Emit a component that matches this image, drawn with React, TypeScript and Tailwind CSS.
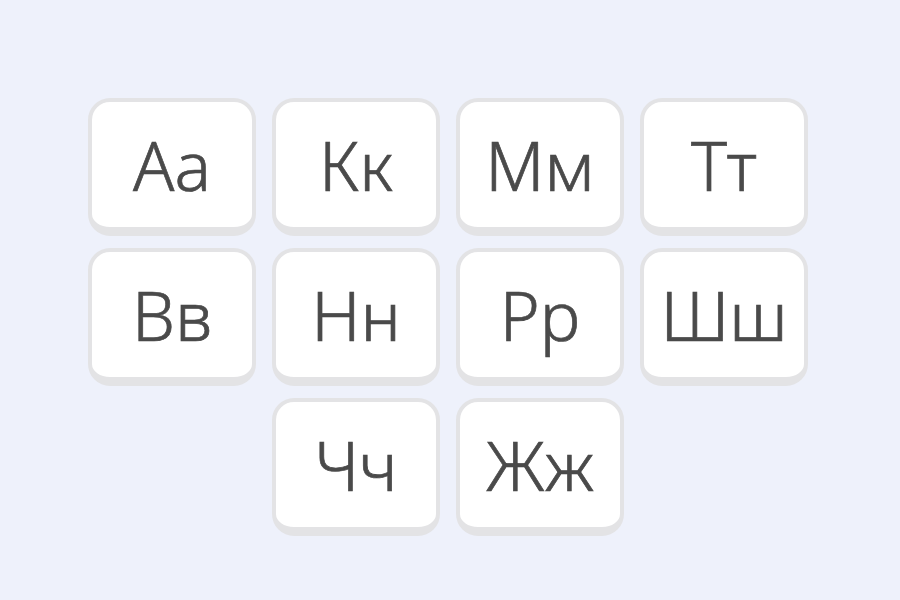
import React from "react";

const rows: (string | null)[][] = [
  ["Aa", "Кк", "Мм", "Тт"],
  ["Вв", "Нн", "Рр", "Шш"],
  [null, "Чч", "Жж", null],
];

function Card({ label }: { label: string }) {
  return (
    <div className="w-[168px] h-[138px] rounded-[22px] border-4 border-b-[9px] border-[#e3e3e5] bg-white flex items-center justify-center">
      <span
        className="text-[68px] font-light leading-none text-[#4a4a4a] [-webkit-text-stroke:0.7px_#4a4a4a]"
        style={{ fontFamily: '"Noto Sans", "Open Sans", sans-serif' }}
      >
        {label}
      </span>
    </div>
  );
}

export default function App() {
  return (
    <div className="w-[900px] h-[600px] bg-[#eef1fb] pt-[98px] pl-[88px]">
      <div className="grid grid-cols-[repeat(4,168px)] gap-x-[16px] gap-y-[12px]">
        {rows.flat().map((l, i) =>
          l ? <Card key={i} label={l} /> : <div key={i} />
        )}
      </div>
    </div>
  );
}
